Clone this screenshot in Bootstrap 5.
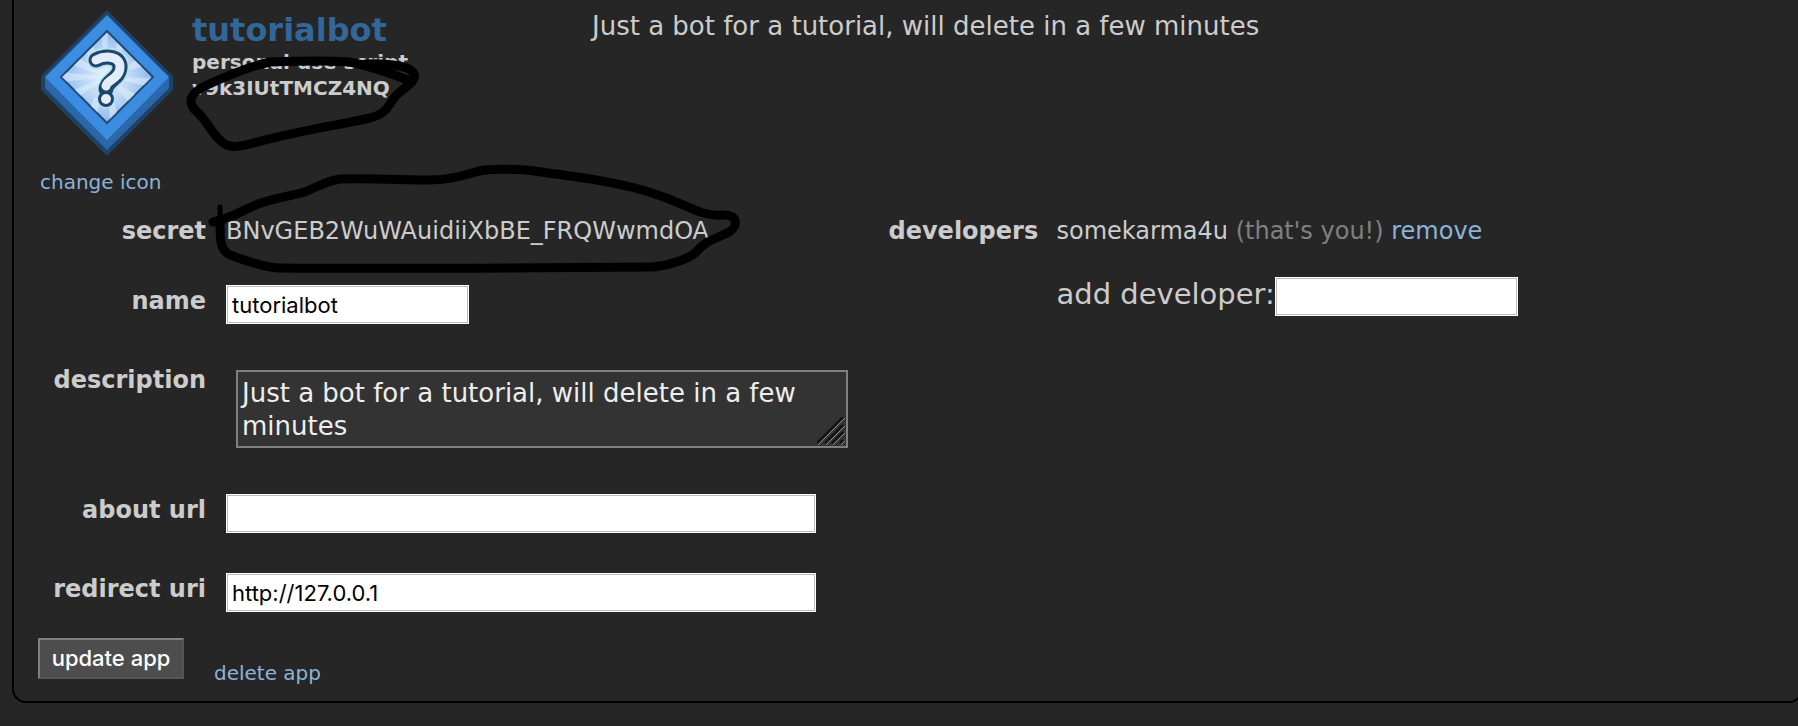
<!DOCTYPE html>
<html lang="en">
<head>
<meta charset="utf-8">
<meta name="viewport" content="width=device-width, initial-scale=1">
<title>tutorialbot</title>
<link href="https://cdn.jsdelivr.net/npm/bootstrap@5.3.0/dist/css/bootstrap.min.css" rel="stylesheet">
<style>
body { background: #262626; color: #ccc; font-family: Verdana, "DejaVu Sans", sans-serif; font-size: 24px; line-height: 32px; overflow-x: hidden; }
a { color: #8cb3d9; text-decoration: none; }
.app-panel { margin: 0 -5px 0 12px; padding: 0 64px 14px 26px; border: 2px solid #000; border-top: 0; border-radius: 0 0 14px 14px; }
.app-head { height: 168px; }
.app-icon { width: 152px; padding-top: 10px; }
.app-icon svg { width: 134px; height: 146px; }
.app-title { width: 400px; padding-top: 11px; font-size: 20px; line-height: 26px; font-weight: bold; }
.app-title h1 { font-size: 32px; line-height: 38px; font-weight: bold; color: #369; margin: 0; }
.app-about { padding-top: 10px; font-size: 26px; }
.small-link { font-size: 20px; line-height: 28px; }
.form-cols { display: grid; grid-template-columns: 1fr 1fr; margin-top: 19px; }
.fields { display: flex; flex-direction: column; gap: 40px; }
.secret-row { height: 30px; }
.field-name { width: 166px; margin-right: 20px; text-align: right; font-weight: bold; flex: none; }
.field-name.dev { width: 148px; }
.text-in { height: 39px; border: 1px solid #fff; outline: 1px solid #bbb; outline-offset: -2px; background: #fff; color: #000; padding: 0 5px; font: 22px/37px Inter, sans-serif; border-radius: 0; }
.in-short { width: 243px; }
.in-long { width: 590px; }
.desc-wrap { position: relative; margin: 6px 0 6px 10px; width: 612px; }
.desc-wrap textarea { display: block; width: 100%; height: 78px; border: 2px solid #808080; background: #333; color: #eee; padding: 5px 4px; font-size: 26px; line-height: 33px; resize: none; overflow: hidden; }
.desc-wrap svg { position: absolute; right: 3px; bottom: 3px; width: 28px; height: 28px; }
.hint { color: #808080; }
.add-row { margin-top: 30px; }
.add-label { font-size: 29px; line-height: 34px; }
.actions { margin: 26px 0 0 -2px; gap: 30px; }
.actions .small-link { margin-top: 21px; }
.update-btn { width: 146px; height: 41px; border: 2px solid; border-color: #808080 #555 #555 #808080; background: #4d4d4d; color: #fff; font: 500 22px/24px Inter, sans-serif; padding: 0 0 2px; }
.ink { position: absolute; left: 0; top: 0; width: 760px; height: 290px; pointer-events: none; }
</style>
</head>
<body>
<main class="position-relative">
  <section class="app-panel">
    <header class="app-head d-flex">
      <div class="app-icon flex-shrink-0">
        <svg viewBox="0 0 134 146" role="img" aria-label="app icon">
          <defs>
            <radialGradient id="glow"><stop offset="0" stop-color="#eaf5ff"/><stop offset=".5" stop-color="#bdd8f5"/><stop offset="1" stop-color="#8db9ea"/></radialGradient>
            <clipPath id="face"><path d="M67 23 112 67 67 112 22 67Z"/></clipPath>
          </defs>
          <path d="M67 3 131 67V79L67 143 3 79V67Z" fill="#2b68a9" stroke="#1f4367" stroke-width="4" stroke-linejoin="round"/>
          <path d="M67 5 129 67 67 130 5 67Z" fill="#3b8de2"/>
          <path d="M67 21 113 67 67 113 21 67Z" fill="url(#glow)" stroke="#1f4a78" stroke-width="2"/>
          <g clip-path="url(#face)" fill="#e4f1fe" opacity=".5">
            <path d="M67 67 60 20H68ZM67 67 80 24 88 30ZM67 67 100 48 104 56ZM67 67 112 68 110 77ZM67 67 98 86 90 94ZM67 67 78 106 70 112ZM67 67 56 108 48 100ZM67 67 34 90 28 82ZM67 67 22 72V62ZM67 67 30 54 36 46ZM67 67 42 38 50 30Z"/>
          </g>
          <g fill="none" stroke-linecap="round" stroke-linejoin="round">
            <path d="M56 50C66 45 81 46 80 58C79 69 67 70 66 82M66 88V89" stroke="#b9e2ee" stroke-width="19"/>
            <path d="M56 50C66 45 81 46 80 58C79 69 67 70 66 79" stroke="#1d456e" stroke-width="15"/>
            <circle cx="66" cy="89" r="8" fill="#1d456e"/>
            <path d="M56 50C66 45 81 46 80 58C79 69 67 70 66 76" stroke="#e3edfa" stroke-width="9"/>
            <circle cx="66" cy="89" r="5" fill="#e3edfa"/>
          </g>
        </svg>
      </div>
      <div class="app-title flex-shrink-0">
        <h1>tutorialbot</h1>
        <div>personal use script</div>
        <div>v9k3IUtTMCZ4NQ</div>
      </div>
      <div class="app-about">Just a bot for a tutorial, will delete in a few minutes</div>
    </header>
    <a class="small-link d-block" href="#">change icon</a>
    <form>
      <div class="form-cols">
        <div class="fields">
          <div class="secret-row d-flex"><span class="field-name">secret</span><span>BNvGEB2WuWAuidiiXbBE_FRQWwmdOA</span></div>
          <div class="d-flex"><label class="field-name" for="name">name</label><input class="text-in in-short" id="name" value="tutorialbot"></div>
          <div class="d-flex"><label class="field-name" for="desc">description</label>
            <div class="desc-wrap"><textarea id="desc">Just a bot for a tutorial, will delete in a few minutes</textarea>
              <svg viewBox="0 0 28 28" fill="none" aria-hidden="true"><path stroke="#111" stroke-width="2" d="M0 26 26 0M8 26 26 8M15 26 26 15M23 26 26 23"/><path stroke="#8a8a8a" d="M1 28 28 1M9 28 28 9M16 28 28 16M24 28 28 24"/></svg>
            </div>
          </div>
          <div class="d-flex"><label class="field-name" for="about">about url</label><input class="text-in in-long" id="about"></div>
          <div class="d-flex"><label class="field-name" for="redirect">redirect uri</label><input class="text-in in-long" id="redirect" value="http://127.0.0.1"></div>
        </div>
        <div class="d-flex align-items-start">
          <span class="field-name dev">developers</span>
          <div>
            <div>somekarma4u <span class="hint">(that's you!)</span> <a href="#">remove</a></div>
            <div class="add-row d-flex"><label class="add-label" for="adddev">add developer:</label><input class="text-in in-short" id="adddev"></div>
          </div>
        </div>
      </div>
      <div class="actions d-flex align-items-start"><button class="update-btn" type="button">update app</button><a class="small-link" href="#">delete app</a></div>
    </form>
  </section>
  <svg class="ink" viewBox="0 0 760 290" fill="none" stroke="#000" stroke-linecap="round" stroke-linejoin="round" aria-hidden="true">
    <path stroke-width="9" d="M408 80C390 73 370 66 350 62C325 60 295 61 270 62C250 66 220 79 205 86C188 94 189 103 195 110C208 121 210 132 222 142C230 149 240 146 250 144C300 130 340 125 370 118C392 112 387 102 400 92C407 86 417 80 414 74C410 65 385 63 365 64"/>
    <path stroke-width="5" d="M220 207V225"/>
    <path stroke-width="9" d="M220 222C220 240 220 250 230 255C245 260 264 268 279 268C400 269 530 268 651 267C663 267 690 259 696 252C706 240 718 238 729 232C738 227 739 214 722 215C703 217 690 206 658 195C625 183 580 177 526 170C510 169 492 168 479 171C462 176 450 180 430 180C405 180 370 178 340 179C325 181 312 190 301 193C285 197 272 199 258 204C243 210 230 219 213 222"/>
  </svg>
</main>
<script src="https://cdn.jsdelivr.net/npm/bootstrap@5.3.0/dist/js/bootstrap.bundle.min.js"></script>
</body>
</html>
